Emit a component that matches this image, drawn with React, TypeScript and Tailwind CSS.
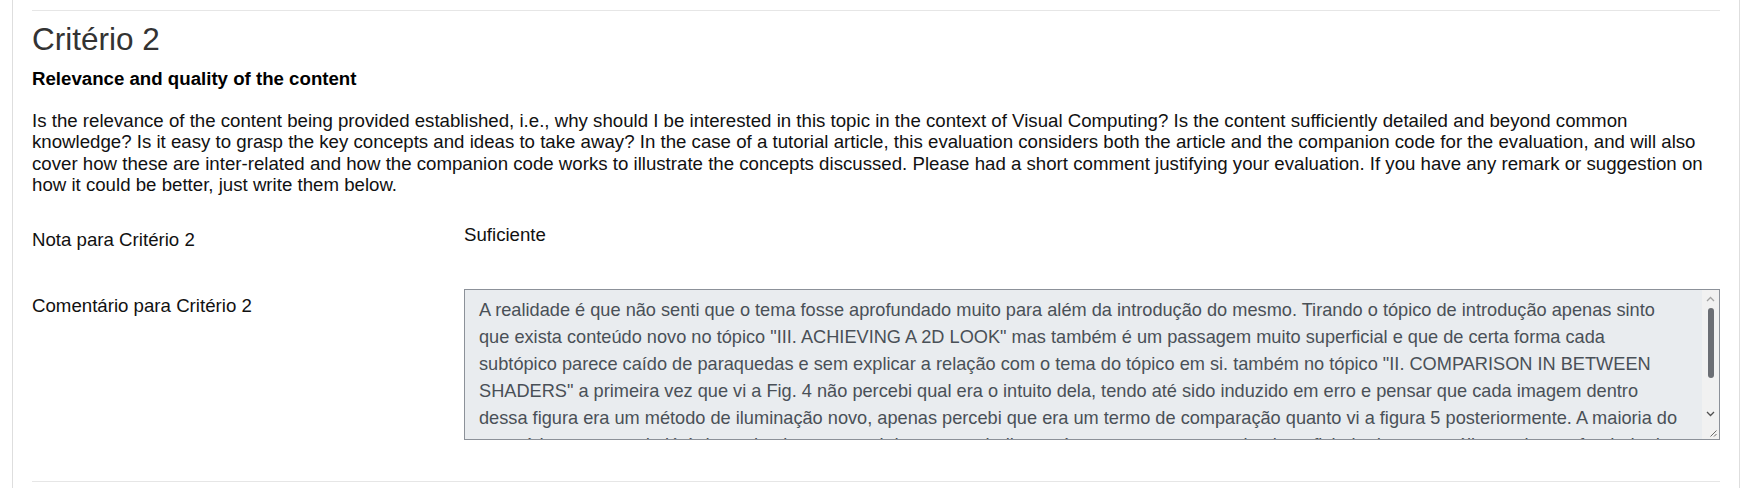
import React from "react";

const comment =
  'A realidade é que não senti que o tema fosse aprofundado muito para além da introdução do mesmo. Tirando o tópico de introdução apenas sinto que exista conteúdo novo no tópico "III. ACHIEVING A 2D LOOK" mas também é um passagem muito superficial e que de certa forma cada subtópico parece caído de paraquedas e sem explicar a relação com o tema do tópico em si. também no tópico "II. COMPARISON IN BETWEEN SHADERS" a primeira vez que vi a Fig. 4 não percebi qual era o intuito dela, tendo até sido induzido em erro e pensar que cada imagem dentro dessa figura era um método de iluminação novo, apenas percebi que era um termo de comparação quanto vi a figura 5 posteriormente. A maioria do conteúdo apresentado já é do conhecimento geral de quem trabalha na área e penso que o artigo beneficiaria de uma análise mais aprofundada dos shaders apresentados.';

function ScrollBar() {
  return (
    <div className="flex w-[17px] shrink-0 flex-col bg-[#f1f1f1]">
      <div className="flex h-[17px] items-center justify-center">
        <svg width="9" height="6" viewBox="0 0 9 6" aria-hidden>
          <path d="M1 5 L4.5 1.5 L8 5" fill="none" stroke="#a3a3a3" strokeWidth="1.3" />
        </svg>
      </div>
      <div className="flex h-[71px] justify-center pt-[1px]">
        <div className="w-[6px] rounded-full bg-[#6b6e74]" />
      </div>
      <div className="flex-1" />
      <div className="flex h-[17px] items-center justify-center">
        <svg width="9" height="6" viewBox="0 0 9 6" aria-hidden>
          <path d="M1 1 L4.5 4.5 L8 1" fill="none" stroke="#505050" strokeWidth="1.3" />
        </svg>
      </div>
      <div className="flex h-[17px] items-end justify-end bg-[#f1f1f1] p-[2px]">
        <svg width="8" height="8" viewBox="0 0 8 8" aria-hidden>
          <path d="M7.5 1.5 L1.5 7.5 M7.5 5 L5 7.5" fill="none" stroke="#6b6b6b" strokeWidth="1" />
        </svg>
      </div>
    </div>
  );
}

export default function App() {
  return (
    <div className="h-[488px] overflow-hidden bg-white" style={{ fontFamily: '"Liberation Sans", Arial, sans-serif' }}>
      <div className="mx-[12px] h-full border-x border-[#dedede] px-[19px] pt-[10px]">
        <hr className="border-0 border-t border-[#e6e6e6]" />

        <h3 className="mt-[10px] text-[31.5px] leading-[36px] font-normal text-[#333333]">Critério 2</h3>
        <p className="mt-[11px] text-[18.67px] leading-[21.5px] font-bold text-black">Relevance and quality of the content</p>
        <p className="mt-[20px] text-[18.67px] leading-[21.6px] text-[#111111]">
          Is the relevance of the content being provided established, i.e., why should I be interested in this topic in the
          context of Visual Computing? Is the content sufficiently detailed and beyond common knowledge? Is it easy to grasp the
          key concepts and ideas to take away? In the case of a tutorial article, this evaluation considers both the article and
          the companion code for the evaluation, and will also cover how these are inter-related and how the companion code works
          to illustrate the concepts discussed. Please had a short comment justifying your evaluation. If you have any remark or
          suggestion on how it could be better, just write them below.
        </p>

        <div className="mt-[28px] flex text-[18.67px] leading-[21.5px] text-[#111111]">
          <div className="w-[432px] shrink-0 pt-[5px]">Nota para Critério 2</div>
          <div>Suficiente</div>
        </div>

        <div className="mt-[39px] flex text-[18.67px] leading-[21.5px] text-[#111111]">
          <div className="w-[432px] shrink-0 pt-[6px]">Comentário para Critério 2</div>
          <div className="flex h-[151px] w-[1256px] overflow-hidden border border-[#8c9199] bg-[#e9ecef]">
            <div className="flex-1 overflow-hidden pt-[7px] pr-[18px] pl-[14px] text-[18.2px] leading-[27px] text-[#495057]">
              {comment}
            </div>
            <ScrollBar />
          </div>
        </div>

        <hr className="mt-[41px] border-0 border-t border-[#e6e6e6]" />
      </div>
    </div>
  );
}
